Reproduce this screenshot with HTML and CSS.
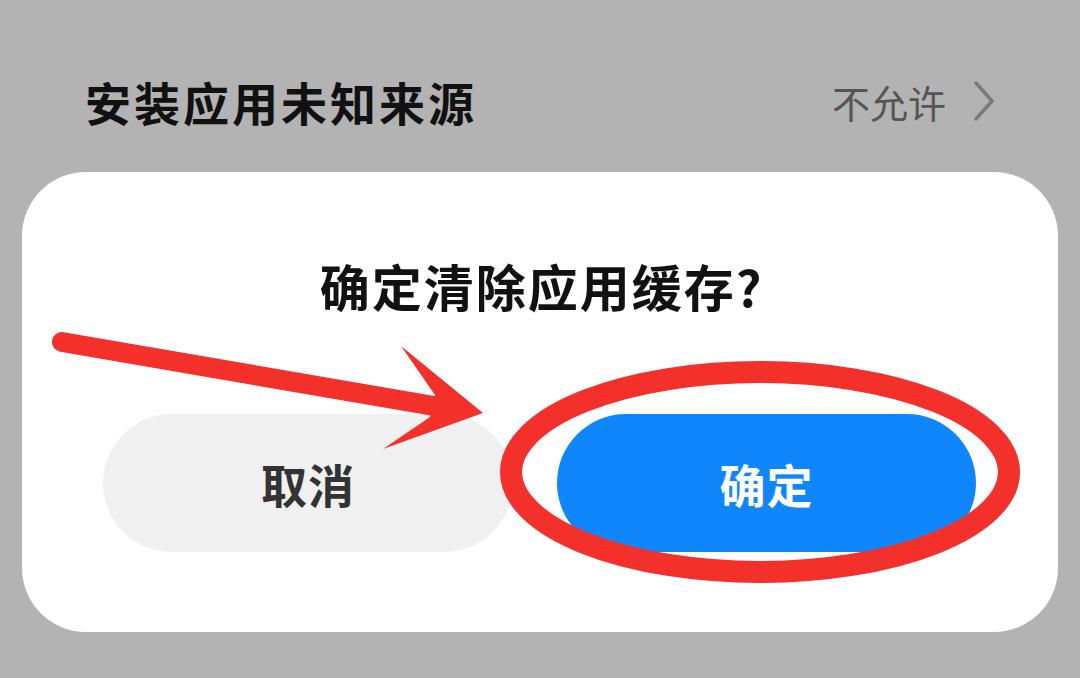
FILE: index.html
```html
<!DOCTYPE html>
<html lang="zh-CN">
<head>
<meta charset="utf-8">
<title>确定清除应用缓存</title>
<link rel="stylesheet" href="styles.css">
</head>
<body>
<div class="screen">
  <div class="row">
    <span class="row-label">安装应用未知来源</span>
    <span class="row-value">不允许
      <svg class="chev" width="22" height="40" viewBox="0 0 22 40"><path d="M3 2 L19 20 L3 38" fill="none" stroke="#7a7a7a" stroke-width="3.5" stroke-linecap="round" stroke-linejoin="round"/></svg>
    </span>
  </div>
  <div class="dialog">
    <div class="dialog-title">确定清除应用缓存?</div>
    <div class="actions">
      <div class="btn btn-cancel">取消</div>
      <div class="btn btn-ok">确定</div>
    </div>
  </div>
  <svg class="annot" width="1080" height="678" viewBox="0 0 1080 678">
    <line x1="62" y1="342" x2="434" y2="406" stroke="#f4302b" stroke-width="20" stroke-linecap="round"/>
    <polygon points="435,395 401,346 483,413 383,449 430,417" fill="#f4302b"/>
    <ellipse cx="760" cy="472" rx="249" ry="100" fill="none" stroke="#f4302b" stroke-width="22"/>
  </svg>
</div>
</body>
</html>
```
FILE: styles.css
```css
html, body {
  margin: 0;
  padding: 0;
}
body {
  background: #b3b3b3;
  font-family: "Noto Sans CJK SC", "Noto Sans", sans-serif;
}
.screen {
  position: relative;
  width: 1080px;
  height: 678px;
  overflow: hidden;
}
.row {
  height: 142px;
  padding: 30px 85px 0 85px;
  display: flex;
  align-items: center;
  justify-content: space-between;
}
.row-label {
  font-size: 46px;
  font-weight: 700;
  color: #111;
  letter-spacing: 3px;
}
.row-value {
  display: flex;
  align-items: center;
  gap: 27px;
  font-size: 38px;
  color: #555;
  font-weight: 400;
}
.chev {
  display: block;
}
.dialog {
  margin: 0 22px;
  height: 460px;
  background: #fff;
  border-radius: 64px;
  box-sizing: border-box;
  padding: 83px 82px 0 81px;
}
.dialog-title {
  text-align: center;
  font-size: 50px;
  line-height: 60px;
  font-weight: 700;
  color: #111;
  letter-spacing: 2px;
  padding-left: 4px;
}
.actions {
  margin-top: 99px;
  display: flex;
  gap: 44px;
}
.btn {
  height: 138px;
  border-radius: 69px;
  display: flex;
  align-items: center;
  justify-content: center;
  font-size: 46px;
  font-weight: 700;
  letter-spacing: 1px;
}
.btn-cancel {
  flex: 410 1 0;
  background: #f0f0f0;
  color: #333;
}
.btn-ok {
  flex: 419 1 0;
  background: #1086fd;
  color: #fff;
}
.annot {
  position: absolute;
  left: 0;
  top: 0;
  pointer-events: none;
}
```
